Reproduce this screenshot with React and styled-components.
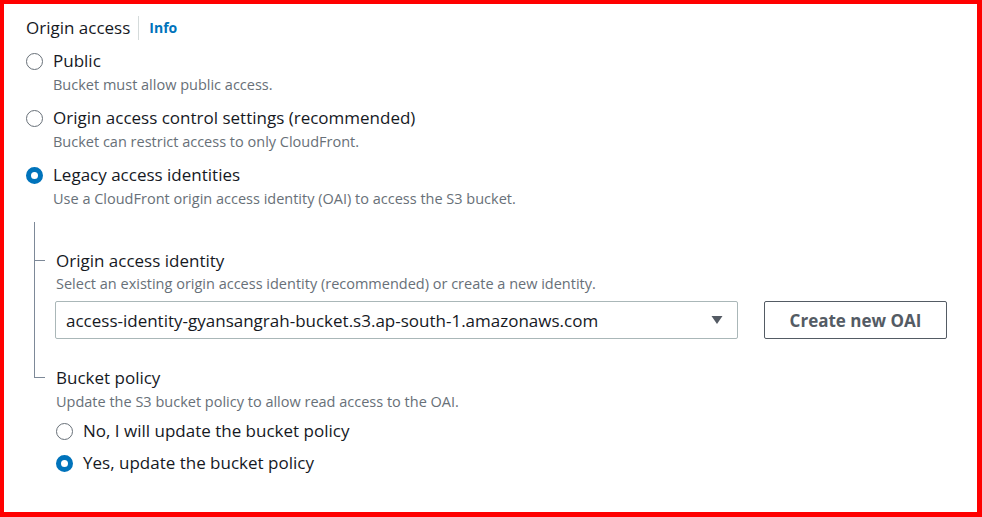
import React from 'react';
import styled, { createGlobalStyle } from 'styled-components';

const GlobalStyle = createGlobalStyle`
  * { box-sizing: border-box; }
  html, body { margin: 0; padding: 0; background: #fff; }
  body { font-family: 'Open Sans', 'Noto Sans', sans-serif; color: #16191f; }
`;

const Frame = styled.div`
  width: 982px;
  height: 517px;
  border: solid #ff0000;
  border-width: 4px 5px 5px 4px;
  background: #fff;
  padding: 13px 22px 0 22px;
  overflow: hidden;
`;

const Header = styled.div`
  display: flex;
  align-items: center;
  height: 22px;
`;

const Title = styled.span`
  font-size: 17px;
  line-height: 22px;
  color: #16191f;
`;

const Divider = styled.span`
  width: 1px;
  height: 24px;
  background: #d5dbdb;
  margin: 0 10px 0 8px;
`;

const InfoLink = styled.a`
  font-size: 14px;
  font-weight: 700;
  color: #0073bb;
  text-decoration: none;
  line-height: 22px;
`;

const Group = styled.div`
  display: flex;
  flex-direction: column;
  gap: ${(p) => p.$gap}px;
  margin-top: ${(p) => p.$top}px;
`;

const Option = styled.label`
  display: grid;
  grid-template-columns: 16px 1fr;
  column-gap: 11px;
  align-items: center;
  cursor: pointer;
`;

const Radio = styled.span`
  width: 17px;
  height: 17px;
  margin-left: -0.5px;
  border-radius: 50%;
  border: ${(p) => (p.$checked ? '5.5px solid #0073bb' : '1.5px solid #687078')};
  background: #fff;
`;

const Label = styled.span`
  font-size: 17px;
  line-height: 22px;
  color: #16191f;
`;

const Desc = styled.span`
  grid-column: 2;
  margin-top: 2px;
  font-size: 14.5px;
  line-height: 22px;
  color: #687078;
`;

const Tree = styled.div`
  margin-left: 8px;
  margin-top: 12px;
`;

const Branch = styled.div`
  position: relative;
  padding-top: ${(p) => p.$pad}px;
  padding-left: ${(p) => (p.$last ? 22 : 21)}px;
  border-left: ${(p) => (p.$last ? 'none' : '1px solid #7d8998')};

  &::before {
    content: '';
    position: absolute;
    left: ${(p) => (p.$last ? 0 : -1)}px;
    top: ${(p) => p.$pad + 10}px;
    width: 11px;
    height: 1px;
    background: #7d8998;
  }

  ${(p) =>
    p.$last &&
    `
    &::after {
      content: '';
      position: absolute;
      left: 0;
      top: 0;
      width: 1px;
      height: ${p.$pad + 11}px;
      background: #7d8998;
    }
  `}
`;

const FieldLabel = styled.div`
  font-size: 17px;
  line-height: 22px;
  color: #16191f;
`;

const FieldDesc = styled.div`
  font-size: 14.5px;
  line-height: 20px;
  margin-top: ${(p) => p.$top ?? 2}px;
  color: #687078;
`;

const Row = styled.div`
  display: flex;
  gap: 26px;
  margin-top: 7px;
  margin-left: -1px;
  padding-right: 8px;
`;

const Select = styled.div`
  flex: 1;
  height: 38px;
  border: 1px solid #aab7b8;
  border-radius: 2px;
  display: flex;
  align-items: center;
  justify-content: space-between;
  padding: 0 14px 0 10px;
  font-size: 17px;
  color: #16191f;
`;

const Button = styled.button`
  width: 183px;
  height: 38px;
  border: 1px solid #545b64;
  border-radius: 2px;
  background: #fff;
  color: #545b64;
  font-family: inherit;
  font-size: 17px;
  font-weight: 700;
  cursor: pointer;
`;

const Caret = () => (
  <svg width="12" height="10" viewBox="0 0 12 10">
    <path d="M0.5 1 L11.5 1 L6 9 Z" fill="#545b64" />
  </svg>
);

const topOptions = [
  { label: 'Public', desc: 'Bucket must allow public access.' },
  {
    label: 'Origin access control settings (recommended)',
    desc: 'Bucket can restrict access to only CloudFront.',
  },
  {
    label: 'Legacy access identities',
    desc: 'Use a CloudFront origin access identity (OAI) to access the S3 bucket.',
    checked: true,
  },
];

const policyOptions = [
  { label: 'No, I will update the bucket policy' },
  { label: 'Yes, update the bucket policy', checked: true },
];

export default function App() {
  return (
    <>
      <GlobalStyle />
      <Frame>
        <Header>
          <Title>Origin access</Title>
          <Divider />
          <InfoLink href="#">Info</InfoLink>
        </Header>

        <Group $gap={11} $top={11}>
          {topOptions.map((o) => (
            <Option key={o.label}>
              <Radio $checked={o.checked} />
              <Label>{o.label}</Label>
              <Desc>{o.desc}</Desc>
            </Option>
          ))}
        </Group>

        <Tree>
          <Branch $pad={28}>
            <FieldLabel>Origin access identity</FieldLabel>
            <FieldDesc>
              Select an existing origin access identity (recommended) or create a new identity.
            </FieldDesc>
            <Row>
              <Select>
                <span>access-identity-gyansangrah-bucket.s3.ap-south-1.amazonaws.com</span>
                <Caret />
              </Select>
              <Button>Create new OAI</Button>
            </Row>
          </Branch>
          <Branch $last $pad={28}>
            <FieldLabel>Bucket policy</FieldLabel>
            <FieldDesc $top={3}>Update the S3 bucket policy to allow read access to the OAI.</FieldDesc>
            <Group $gap={10} $top={8}>
              {policyOptions.map((o) => (
                <Option key={o.label}>
                  <Radio $checked={o.checked} />
                  <Label>{o.label}</Label>
                </Option>
              ))}
            </Group>
          </Branch>
        </Tree>
      </Frame>
    </>
  );
}
